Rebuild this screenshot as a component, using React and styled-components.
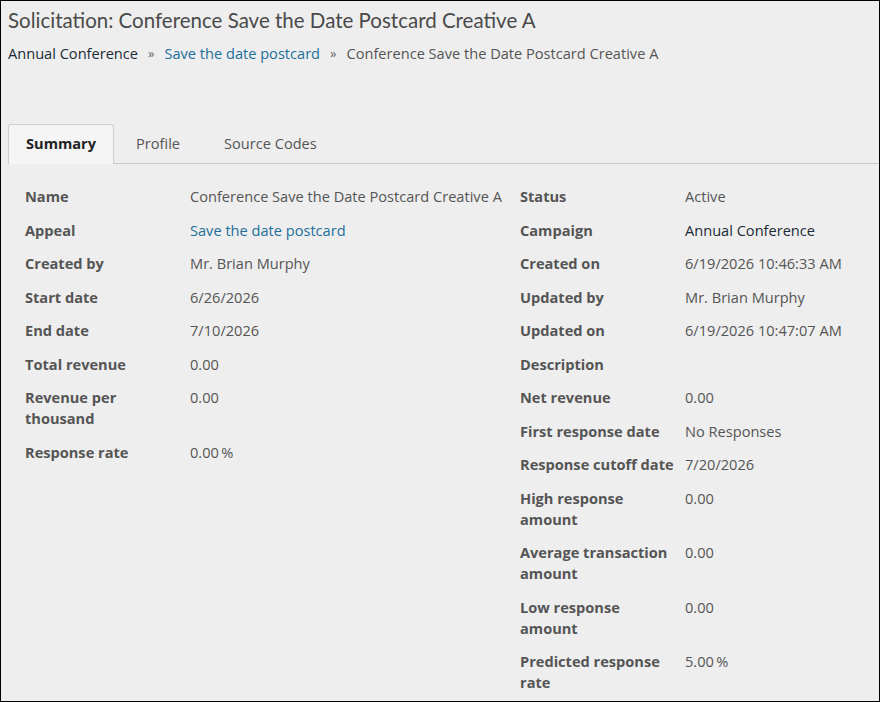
import React from "react";
import styled, { createGlobalStyle } from "styled-components";

const GlobalStyle = createGlobalStyle`
  html, body {
    margin: 0;
    padding: 0;
    background: #eeeeee;
  }
  * {
    box-sizing: border-box;
  }
`;

const Page = styled.div`
  width: 880px;
  height: 702px;
  border: 1px solid #000;
  background: #eeeeee;
  font-family: "Open Sans", "Liberation Sans", sans-serif;
  font-size: 14.6px;
  color: #555;
  overflow: hidden;
`;

const Header = styled.header`
  padding: 6px 7px 0;
  height: 123px;
`;

const Title = styled.h1`
  margin: 0;
  font-family: Lato, "Open Sans", sans-serif;
  font-weight: 400;
  font-size: 20.5px;
  line-height: 26px;
  color: #4a4a4a;
`;

const Crumbs = styled.nav`
  display: flex;
  align-items: center;
  gap: 10px;
  margin-top: 10px;
  line-height: 20px;
`;

const Crumb = styled.a`
  text-decoration: none;
  color: ${(p) => (p.$tone === "link" ? "#1d6e9a" : p.$tone === "dark" ? "#1b2a36" : "#555")};
`;

const Sep = styled.span`
  color: #666;
  font-size: 13px;
`;

const TabBar = styled.div`
  display: flex;
  margin-left: 7px;
  border-bottom: 1px solid #c8c8c8;
  height: 40px;
`;

const Tab = styled.button`
  border: 1px solid ${(p) => (p.$active ? "#cfcfcf" : "transparent")};
  border-bottom: none;
  background: ${(p) => (p.$active ? "#f5f5f5" : "transparent")};
  border-radius: 3px 3px 0 0;
  margin-bottom: -1px;
  padding: 0 ${(p) => (p.$active ? "17px" : "21px")} 3px;
  font-family: inherit;
  font-size: 14.6px;
  font-weight: ${(p) => (p.$active ? 700 : 400)};
  color: ${(p) => (p.$active ? "#222" : "#555")};
  cursor: pointer;
`;

const Columns = styled.div`
  display: grid;
  grid-template-columns: 495px 1fr;
  padding: 22px 0 0 24px;
`;

const List = styled.dl`
  margin: 0;
  display: grid;
  grid-template-columns: 165px 1fr;
  row-gap: 12.5px;
  align-content: start;
  line-height: 21px;
`;

const Label = styled.dt`
  font-weight: 700;
  padding-right: 10px;
  color: #555;
`;

const Value = styled.dd`
  margin: 0;
  white-space: nowrap;
  color: ${(p) => (p.$tone === "link" ? "#1d6e9a" : p.$tone === "dark" ? "#1b2a36" : "#555")};
`;

const left = [
  ["Name", "Conference Save the Date Postcard Creative A"],
  ["Appeal", "Save the date postcard", "link"],
  ["Created by", "Mr. Brian Murphy"],
  ["Start date", "6/26/2026"],
  ["End date", "7/10/2026"],
  ["Total revenue", "0.00"],
  ["Revenue per thousand", "0.00"],
  ["Response rate", "0.00\u2009%"],
];

const right = [
  ["Status", "Active"],
  ["Campaign", "Annual Conference", "dark"],
  ["Created on", "6/19/2026 10:46:33 AM"],
  ["Updated by", "Mr. Brian Murphy"],
  ["Updated on", "6/19/2026 10:47:07 AM"],
  ["Description", ""],
  ["Net revenue", "0.00"],
  ["First response date", "No Responses"],
  ["Response cutoff date", "7/20/2026"],
  ["High response amount", "0.00"],
  ["Average transaction amount", "0.00"],
  ["Low response amount", "0.00"],
  ["Predicted response rate", "5.00\u2009%"],
];

const Fields = ({ rows }) => (
  <List>
    {rows.map(([label, value, tone]) => (
      <React.Fragment key={label}>
        <Label>{label}</Label>
        <Value $tone={tone}>{value}</Value>
      </React.Fragment>
    ))}
  </List>
);

export default function App() {
  return (
    <>
      <GlobalStyle />
      <Page>
        <Header>
          <Title>Solicitation: Conference Save the Date Postcard Creative A</Title>
          <Crumbs>
            <Crumb $tone="dark" href="#">Annual Conference</Crumb>
            <Sep>»</Sep>
            <Crumb $tone="link" href="#">Save the date postcard</Crumb>
            <Sep>»</Sep>
            <Crumb as="span">Conference Save the Date Postcard Creative A</Crumb>
          </Crumbs>
        </Header>
        <TabBar>
          <Tab $active>Summary</Tab>
          <Tab>Profile</Tab>
          <Tab>Source Codes</Tab>
        </TabBar>
        <Columns>
          <Fields rows={left} />
          <Fields rows={right} />
        </Columns>
      </Page>
    </>
  );
}
